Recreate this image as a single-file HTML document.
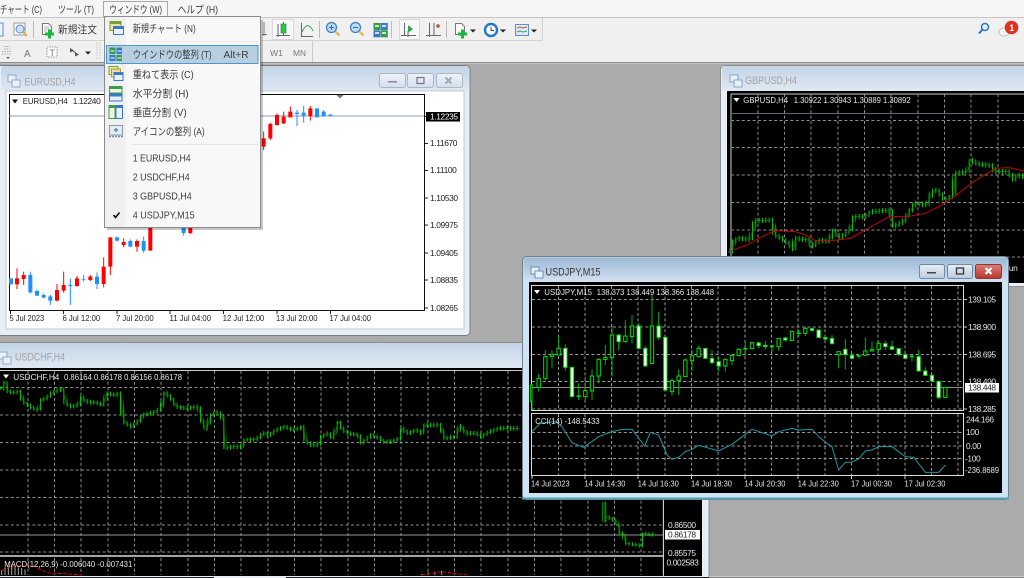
<!DOCTYPE html>
<html lang="ja"><head><meta charset="utf-8"><title>MT4</title>
<style>
html,body{margin:0;padding:0;background:#ababab;width:1024px;height:578px;overflow:hidden}
svg{display:block;filter:blur(.35px)}
text{font-family:"Liberation Sans","Noto Sans CJK JP",sans-serif;font-size:8.4px;letter-spacing:-.37px;fill:#e4e4e4}
text[textLength]{letter-spacing:0}
.k text,text.k{fill:#222}
.m text{font-size:10.5px;fill:#3c3c3c}
.t{font-size:11px!important;fill:#a4a4a4!important}
.f{fill:none}
</style></head><body>
<svg width="1024" height="578" viewBox="0 0 1024 578" xmlns="http://www.w3.org/2000/svg">
<defs>
<linearGradient id="g1" x1="0" y1="0" x2="0" y2="1"><stop offset="0" stop-color="#c3d4e6"/><stop offset="1" stop-color="#dfe9f3"/></linearGradient>
<linearGradient id="g2" x1="0" y1="0" x2="0" y2="1"><stop offset="0" stop-color="#9db7d4"/><stop offset="1" stop-color="#d0e1f1"/></linearGradient>
<linearGradient id="g3" x1="0" y1="0" x2="0" y2="1"><stop offset="0" stop-color="#eef3f8"/><stop offset="1" stop-color="#d4dfea"/></linearGradient>
<linearGradient id="g5" x1="0" y1="0" x2="0" y2="1"><stop offset="0" stop-color="#e8eef4"/><stop offset="1" stop-color="#bccbdc"/></linearGradient>
<linearGradient id="g4" x1="0" y1="0" x2="0" y2="1"><stop offset="0" stop-color="#d98078"/><stop offset="1" stop-color="#b8342a"/></linearGradient>
<pattern id="vb" width="10" height="10" patternUnits="userSpaceOnUse"><rect width="2.800" height="10" fill="#00d000"/></pattern>
</defs>
<rect width="1024" height="578" fill="#ababab"/>

<!-- GBPUSD window -->
<rect x="720.5" y="65.5" width="320" height="221" rx="4" fill="#e6eef7" stroke="#8e8e8e"/>
<rect x="722" y="66" width="318" height="25" fill="url(#g1)"/>
<text class="t" x="745" y="84" textLength="52" lengthAdjust="spacingAndGlyphs">GBPUSD,H4</text>
<g fill="#e8f0f8" stroke="#6f94c0" stroke-width=".8"><rect x="730" y="75" width="8" height="7"/><rect x="734" y="80" width="8" height="7"/></g>
<rect x="727" y="91" width="297" height="192" fill="#000"/>
<path d="M731 94H1024M731 94V283" stroke="#ccc" class="f"/>
<path d="M731 113.5H1024" stroke="#667" class="f"/>
<path d="M758 94V283M784.500 94V283M811 94V283M838 94V283M864.500 94V283M891 94V283M918 94V283M944.500 94V283M971 94V283M998 94V283M731 120.500H1024M731 147.500H1024M731 175H1024M731 202.500H1024M731 230H1024M731 257H1024" stroke="#8c8c8c" stroke-dasharray="3 2.4" class="f"/>
<g transform="translate(512 0) scale(.33333)" fill="none" stroke-linejoin="bevel">
<path d="M657 760L665 725L680 715L715 718L722 690L730 662L780 660L790 705L810 715L835 735L845 750L850 715L890 720L900 740L925 720L950 725L965 690L985 715L1015 690L1027 650L1060 650L1080 635L1135 630L1145 680L1175 665L1190 640L1210 610L1245 615L1260 575L1275 570L1300 600L1325 585L1330 520L1365 515L1378 480L1400 492L1440 497L1450 515L1490 515L1505 540L1520 525L1536 530" stroke="url(#vb)" stroke-width="16"/>
<path d="M657 760L665 725L680 715L715 718L722 690L730 662L780 660L790 705L810 715L835 735L845 750L850 715L890 720L900 740L925 720L950 725L965 690L985 715L1015 690L1027 650L1060 650L1080 635L1135 630L1145 680L1175 665L1190 640L1210 610L1245 615L1260 575L1275 570L1300 600L1325 585L1330 520L1365 515L1378 480L1400 492L1440 497L1450 515L1490 515L1505 540L1520 525L1536 530" stroke="#00a800" stroke-width="1.500"/>
<path d="M657 752L705 735L745 712L790 692L850 695L880 705L910 722L960 722L1015 715L1060 690L1130 650L1185 650L1240 640L1290 615L1340 580L1385 545L1450 505L1490 503L1536 513" stroke="#c80000" stroke-width="3"/>
</g>
<path d="M733.500 98h6l-3 4z" fill="#fff"/>
<text x="743.300" y="103" textLength="44.700" lengthAdjust="spacingAndGlyphs">GBPUSD,H4</text>
<text x="793.700" y="103" textLength="117" lengthAdjust="spacingAndGlyphs">1.30922 1.30943 1.30889 1.30892</text>
<text x="1005" y="271">Jun</text>

<!-- EURUSD window -->
<rect x="-5" y="65.500" width="475" height="270" rx="4" fill="#e6eef7" stroke="#7d7d7d"/>
<rect x="1" y="66" width="468" height="25" rx="3" fill="url(#g1)"/>
<g fill="#e8f0f8" stroke="#7c9cc4" stroke-width=".8"><rect x="8" y="75" width="8" height="7"/><rect x="12" y="80" width="8" height="7"/></g>
<text class="t" x="24.500" y="85.500" textLength="51" lengthAdjust="spacingAndGlyphs">EURUSD,H4</text>
<g stroke="#a8b8c8"><rect x="379.500" y="73.500" width="26" height="14" rx="2" fill="url(#g3)"/><rect x="407.500" y="73.500" width="26" height="14" rx="2" fill="url(#g3)"/><rect x="436.500" y="73.500" width="26" height="14" rx="2" fill="url(#g3)"/></g>
<path d="M388 82.500h9v-1.500h-9z" fill="#889"/>
<rect x="417" y="77.500" width="7" height="6" fill="none" stroke="#778" stroke-width="1.200"/>
<path d="M445.500 77.500l6 6m0-6l-6 6" stroke="#a0a8b2" stroke-width="2"/>
<rect x="6" y="91" width="458" height="238" fill="#fff" stroke="#b8c2cc" stroke-width=".8"/>
<path d="M9.500 94.500H424.500V310.500H9.500Z" fill="#fff" stroke="#111"/>
<path d="M9.500 116H424" stroke="#9fb0c2" stroke-width="1.200"/>
<path d="M336.500 95h7l-3.500 3.500z" fill="#6d7480"/>
<path d="M10.500 311v3M63.500 311v3M117 311v3M170 311v3M223.500 311v3M277 311v3M330.500 311v3M425 116.500h3M425 143.500h3M425 170.500h3M425 198h3M425 225h3M425 253h3M425 280h3M425 308h3" stroke="#222"/>
<g transform="translate(0 230) scale(.33333)" fill="none">
<path d="M51 115V177M71 125V165M171 162V214M191 125V188M231 138V170M271 135V153M311 82V172M331 22V135M371 25V52M411 28V65M451 -15V62M571 -15V12" stroke="#f00" stroke-width="3"/>
<path d="M51 145V163M71 135V147M171 180V212M191 165V182M231 145V168M271 140V150M311 110V162M331 22V110M371 36V45M411 33V50M451 -15V62M571 -10V9" stroke="#f00" stroke-width="12"/>
<path d="M91 125V190M111 178V198M131 190V205M151 195V225M211 145V225M251 135V155M291 127V177M351 20V35M391 28V52M431 20V68M551 -12V17" stroke="#1e90ff" stroke-width="3"/>
<path d="M33 145V163M91 135V187M111 183V197M131 195V203M151 199V212M211 165V168M251 148V150M291 140V162M351 22V32M391 33V50M431 33V62M551 -10V9" stroke="#1e90ff" stroke-width="12"/>
</g>
<g transform="scale(.33333)" fill="none">
<path d="M791 395V450M811 368V420M831 340V377M851 335V372M871 320V352M931 318V362" stroke="#f00" stroke-width="3"/>
<path d="M791 415V440M811 372V415M831 345V375M851 350V370M871 335V352M931 325V348" stroke="#f00" stroke-width="12"/>
<path d="M891 330V378M911 318V368M971 330V350M991 342V349" stroke="#1e90ff" stroke-width="3"/>
<path d="M891 338V342M911 338V347M951 325V352M971 335V348M991 344V347" stroke="#1e90ff" stroke-width="12"/>
</g>
<path d="M12 99.500h6l-3 4z" fill="#111"/>
<g class="k">
<text x="22.700" y="104" textLength="45" lengthAdjust="spacingAndGlyphs">EURUSD,H4</text>
<text x="72.700" y="104">1.12240</text>
<text x="430" y="146">1.11670</text><text x="430" y="173">1.11100</text><text x="430" y="200.800">1.10530</text><text x="430" y="228">1.09975</text><text x="430" y="255.800">1.09405</text><text x="430" y="283">1.08835</text><text x="430" y="310.800">1.08265</text>
<text x="9.500" y="320.800" textLength="34.700" lengthAdjust="spacingAndGlyphs">5 Jul 2023</text><text x="62.500" y="320.800" textLength="37.700" lengthAdjust="spacingAndGlyphs">6 Jul 12:00</text><text x="116" y="320.800" textLength="37.700" lengthAdjust="spacingAndGlyphs">7 Jul 20:00</text><text x="169.500" y="320.800" textLength="41.500" lengthAdjust="spacingAndGlyphs">11 Jul 04:00</text><text x="222.800" y="320.800" textLength="41.500" lengthAdjust="spacingAndGlyphs">12 Jul 12:00</text><text x="276" y="320.800" textLength="41.500" lengthAdjust="spacingAndGlyphs">13 Jul 20:00</text><text x="329.500" y="320.800" textLength="41.500" lengthAdjust="spacingAndGlyphs">17 Jul 04:00</text>
</g>
<rect x="426" y="112" width="34" height="9.500" fill="#000"/>
<text x="430" y="119.700" style="fill:#fff">1.12235</text>

<!-- USDCHF window -->
<rect x="-5" y="342.500" width="714" height="240" rx="4" fill="#e6eef7" stroke="#8e8e8e"/>
<rect x="0" y="343" width="708" height="25" fill="url(#g1)"/>
<g fill="#e8f0f8" stroke="#7c9cc4" stroke-width=".8"><rect x="-1" y="352" width="8" height="7"/><rect x="3" y="357" width="8" height="7"/></g>
<text class="t" x="15" y="360.500" textLength="50" lengthAdjust="spacingAndGlyphs">USDCHF,H4</text>
<rect x="0" y="368" width="702" height="208" fill="#000"/>
<path d="M0 370.500H663.500V575" stroke="#ccc" class="f"/>
<path d="M0 535H663" stroke="#777" stroke-width="1.200"/>
<path d="M0 556H663" stroke="#bbb" stroke-width="1.800"/>
<path d="M28 371V555M54.500 371V555M81 371V555M108 371V555M134.500 371V555M161 371V555M188 371V555M214.500 371V555M241 371V555M268 371V555M294.500 371V555M321 371V555M348 371V555M374.500 371V555M401 371V555M428 371V555M454.500 371V555M481 371V555M508 371V555M534.500 371V555M561 371V555M588 371V555M614.500 371V555M641 371V555M0 387.500H663M0 415H663M0 442.500H663M0 470H663M0 497.500H663M0 525H663M0 552H663M28 558V575M54.500 558V575M81 558V575M108 558V575M134.500 558V575M161 558V575M188 558V575M214.500 558V575M241 558V575M268 558V575M294.500 558V575M321 558V575M348 558V575M374.500 558V575M401 558V575M428 558V575M454.500 558V575M481 558V575M508 558V575M534.500 558V575M561 558V575M588 558V575M614.500 558V575M641 558V575" stroke="#8c8c8c" stroke-dasharray="3 2.400" class="f"/>
<g transform="translate(0 230) scale(.33333)" fill="none" stroke-linejoin="bevel">
<path d="M5 480L15 455L25 485L40 487L60 485L70 515L85 525L100 535L115 540L125 510L140 505L155 490L175 480L190 478L197 520L215 530L235 525L245 500L260 515L290 518L310 525L320 490L345 495L362 490L367 550L375 578L395 590L415 575L430 555L450 550L470 545L485 530L495 487L515 505L530 530L560 535L595 530L605 570L620 600L630 560L650 545L665 555L672 580L675 655L700 650L725 650L735 630L770 628L790 610L810 615L830 600L855 590L880 600L912 590L915 630L935 645L955 645L965 620L985 610L1000 625L1015 575L1030 600L1045 610L1075 615L1085 640L1115 615L1140 625L1150 635L1175 635L1200 625L1207 595L1225 610L1250 600L1265 610L1275 585L1320 585L1335 625L1370 620L1380 585L1400 610L1430 610L1445 620L1470 605L1500 595L1560 595" stroke="url(#vb)" stroke-width="14"/>
<path d="M5 480L15 455L25 485L40 487L60 485L70 515L85 525L100 535L115 540L125 510L140 505L155 490L175 480L190 478L197 520L215 530L235 525L245 500L260 515L290 518L310 525L320 490L345 495L362 490L367 550L375 578L395 590L415 575L430 555L450 550L470 545L485 530L495 487L515 505L530 530L560 535L595 530L605 570L620 600L630 560L650 545L665 555L672 580L675 655L700 650L725 650L735 630L770 628L790 610L810 615L830 600L855 590L880 600L912 590L915 630L935 645L955 645L965 620L985 610L1000 625L1015 575L1030 600L1045 610L1075 615L1085 640L1115 615L1140 625L1150 635L1175 635L1200 625L1207 595L1225 610L1250 600L1265 610L1275 585L1320 585L1335 625L1370 620L1380 585L1400 610L1430 610L1445 620L1470 605L1500 595L1560 595" stroke="#00a800" stroke-width="1.500"/>
<path d="M5 1035V1020M15 1035V1012M25 1035V1008M35 1035V1005M45 1035V1010M55 1035V1012M65 1035V1014M75 1035V1018M1265 1035V1032M1285 1035V1027M1305 1035V1024M1325 1035V1022" stroke="#aaa" stroke-width="3"/>
<path d="M5 1022L40 1008L100 1008L140 1028L250 1035M1265 1035L1325 1025L1400 1035" stroke="#e00000" stroke-width="3" stroke-dasharray="10 6"/>
</g>
<g transform="translate(512 250) scale(.33333)" fill="none" stroke-linejoin="bevel">
<path d="M277 755L277 815L285 800L315 815L325 850L335 850L340 880L380 885L388 890L395 850L430 855" stroke="url(#vb)" stroke-width="12"/>
<path d="M277 755L277 815L285 800L315 815L325 850L335 850L340 880L380 885L388 890L395 850L430 855" stroke="#00a800" stroke-width="1.500"/>
<path d="M454 750V980" stroke="#ccc" stroke-width="3"/>
</g>
<path d="M3 374.500h6l-3 4z" fill="#fff"/>
<text x="13.300" y="380" textLength="46" lengthAdjust="spacingAndGlyphs">USDCHF,H4</text>
<text x="64" y="380" textLength="118" lengthAdjust="spacingAndGlyphs">0.86164 0.86178 0.86156 0.86178</text>
<text x="4.300" y="567" textLength="128" lengthAdjust="spacingAndGlyphs">MACD(12,26,9) -0.006040 -0.007431</text>
<text x="668" y="528">0.86500</text>
<rect x="665" y="530" width="35" height="9.500" fill="#fff"/>
<text x="668" y="537.700" style="fill:#222">0.86178</text>
<text x="668" y="555.800">0.85575</text>
<text x="666.500" y="565.500">0.002583</text>
<path d="M0 577.500H1024" stroke="#222"/>
<path d="M214 577.500H286" stroke="#eee"/>
<path d="M709 577H1024" stroke="#e6e6e6"/>

<!-- USDJPY window -->
<rect x="522.500" y="256.500" width="486" height="243" rx="4" fill="#cfe3f3" stroke="#6e7f8e"/>
<rect x="523.500" y="257.500" width="484" height="24" rx="3" fill="url(#g2)"/>
<rect x="522" y="497.500" width="487" height="2" fill="#4fa3b8"/>
<g fill="#e8f0f8" stroke="#4f7eb4" stroke-width=".8"><rect x="531" y="267" width="8" height="7"/><rect x="535" y="271" width="8" height="7"/></g>
<text x="545.500" y="275.500" textLength="55" lengthAdjust="spacingAndGlyphs" style="font-size:11px;fill:#333">USDJPY,M15</text>
<g stroke="#6d89a8"><rect x="919.500" y="264.500" width="25" height="14" rx="2" fill="url(#g5)"/><rect x="947.500" y="264.500" width="25" height="14" rx="2" fill="url(#g5)"/></g>
<rect x="975.500" y="264.500" width="26" height="14" rx="2" fill="url(#g4)" stroke="#8a3a34"/>
<path d="M927 273.500h9v-1.500h-9z" fill="#445"/>
<rect x="956.500" y="268" width="7" height="6" fill="none" stroke="#334" stroke-width="1.300"/>
<path d="M985.500 268l6 6m0-6l-6 6" stroke="#fff" stroke-width="2.200"/>
<rect x="529" y="282" width="473" height="211" fill="#000"/>
<path d="M531.500 285.500H963.500V410.500H531.500ZM531.500 413.500H963.500V475.500H531.500Z" stroke="#ddd" class="f"/>
<path d="M532 387.500H964" stroke="#8a8a8a"/>
<path d="M558.500 286V410M585 286V410M611.500 286V410M638 286V410M665 286V410M691.500 286V410M718 286V410M745 286V410M771.500 286V410M798 286V410M825 286V410M851.500 286V410M878 286V410M905 286V410M931.500 286V410M958 286V410M558.500 414V475M585 414V475M611.500 414V475M638 414V475M665 414V475M691.500 414V475M718 414V475M745 414V475M771.500 414V475M798 414V475M825 414V475M851.500 414V475M878 414V475M905 414V475M931.500 414V475M958 414V475M532 299.500H963M532 327H963M532 354.500H963M532 381.500H963M532 409H963M532 432.500H963M532 446H963M532 458.500H963" stroke="#969696" stroke-dasharray="3 2.400" class="f"/>
<path d="M532 476v3M585 476v3M638 476v3M691.500 476v3M745 476v3M798 476v3M851.500 476v3M905 476v3M964 299.500h3M964 327h3M964 354.500h3M964 409h3" stroke="#ccc"/>
<g transform="translate(512 250) scale(.33333)" fill="none">
<path d="M60 400V480M80 372V425M100 300V390M120 302V355M140 255V315M160 283V362M200 400V450M220 380V458M240 358V450M260 325V400M280 285V345M300 225V380M320 253V300M340 210V278M360 195V280M380 220V298M400 288V350M420 135V342M440 185V270M460 262V425M480 385V437M500 358V435M520 325V382M540 300V362M560 287V322M600 300V342M620 320V365M640 325V365M660 312V345M680 295V320M700 278V318M720 276V298M740 275V295M760 273V298M780 285V305M800 265V302M820 260V275M860 240V260M880 230V258M900 232V245M940 258V272M960 255V283M980 305V355M1000 268V358M1020 310V328M1040 312V325M1060 262V318M1080 275V305M1100 272V305M1120 272V300M1140 272V300M1160 295V318M1180 310V328M1200 315V335M1220 300V365M1240 352V378M1260 373V395M1280 392V447M1300 412V445" stroke="#00b000" stroke-width="3"/>
<path d="M55 405h5v50h-5zM75 385h10v27h-10zM95 320h10v65h-10zM115 313h10v7h-10zM135 295h10v20h-10zM215 422h10v18h-10zM235 378h10v45h-10zM255 328h10v50h-10zM275 322h10v6h-10zM295 255h10v67h-10zM335 258h10v17h-10zM355 228h10v32h-10zM415 228h10v112h-10zM475 392h10v33h-10zM495 378h10v14h-10zM515 330h10v50h-10zM535 318h10v14h-10zM555 295h10v25h-10zM635 328h10v20h-10zM655 316h10v16h-10zM675 298h10v18h-10zM715 278h10v18h-10zM795 265h10v25h-10zM835 244h10v28h-10zM875 235h10v15h-10zM975 305h10v9h-10zM1055 303h10v13h-10zM1075 298h10v5h-10zM1095 281h10v17h-10zM1295 412h10v30h-10z" fill="#000" stroke="#00e000" stroke-width="3"/>
<path d="M155 295h10v57h-10zM175 352h10v88h-10zM315 255h10v20h-10zM375 228h10v67h-10zM395 295h10v53h-10zM435 228h10v34h-10zM455 262h10v158h-10zM575 295h10v30h-10zM595 325h10v13h-10zM615 335h10v13h-10zM735 279h10v8h-10zM755 286h10v4h-10zM815 264h10v6h-10zM895 236h10v5h-10zM915 240h10v23h-10zM935 263h10v4h-10zM955 265h10v16h-10zM995 298h10v16h-10zM1015 316h10v9h-10zM1115 281h10v9h-10zM1135 290h10v8h-10zM1155 296h10v17h-10zM1175 314h10v11h-10zM1215 320h10v43h-10zM1235 363h10v13h-10zM1255 376h10v17h-10zM1275 394h10v48h-10z" fill="#fff" stroke="#00e000" stroke-width="3"/>
<path d="M195 437h10v3h-10zM695 295h10v3h-10zM775 287h10v3h-10zM855 248h10v3h-10zM1035 316h10v3h-10zM1195 318h10v3h-10z" fill="#00e000" stroke="#00e000" stroke-width="2"/>
<path d="M60 545L85 520L130 515L150 530L180 578L215 592L260 560L300 545L330 538L360 538L398 588L415 547L440 555L465 615L480 628L500 622L520 605L540 598L560 586L620 603L660 583L720 538L780 558L800 545L840 535L860 540L900 538L920 560L945 580L960 590L980 660L1000 637L1020 636L1040 627L1060 603L1080 600L1100 590L1140 590L1180 620L1205 622L1240 667L1280 667L1300 645" stroke="#1f9aa0" stroke-width="3"/>
</g>
<path d="M534 290h6l-3 4z" fill="#fff"/>
<text x="544.300" y="295" textLength="47.700" lengthAdjust="spacingAndGlyphs">USDJPY,M15</text>
<text x="596.700" y="295" textLength="117.300" lengthAdjust="spacingAndGlyphs">138.373 138.449 138.366 138.448</text>
<text x="535.300" y="424" textLength="64.300" lengthAdjust="spacingAndGlyphs">CCI(14) -148.5433</text>
<text x="968" y="302.300">139.105</text><text x="968" y="330">138.900</text><text x="968" y="357.300">138.695</text><text x="968" y="384.500">138.490</text>
<rect x="965" y="383" width="34" height="9.500" fill="#fff"/>
<text x="968" y="390.700" style="fill:#222">138.448</text>
<text x="968" y="412">138.285</text>
<text x="966" y="422.500">244.166</text><text x="966" y="435">100</text><text x="966" y="449">0.00</text><text x="965" y="461.500">-100</text><text x="965" y="473" textLength="34" lengthAdjust="spacingAndGlyphs">-236.8689</text>
<g>
<text x="531" y="486.500" textLength="38.700" lengthAdjust="spacingAndGlyphs">14 Jul 2023</text><text x="584.500" y="486.500" textLength="41" lengthAdjust="spacingAndGlyphs">14 Jul 14:30</text><text x="637.800" y="486.500" textLength="41" lengthAdjust="spacingAndGlyphs">14 Jul 16:30</text><text x="691" y="486.500" textLength="41" lengthAdjust="spacingAndGlyphs">14 Jul 18:30</text><text x="744.500" y="486.500" textLength="41" lengthAdjust="spacingAndGlyphs">14 Jul 20:30</text><text x="797.800" y="486.500" textLength="41" lengthAdjust="spacingAndGlyphs">14 Jul 22:30</text><text x="851" y="486.500" textLength="41" lengthAdjust="spacingAndGlyphs">17 Jul 00:30</text><text x="904.500" y="486.500" textLength="41" lengthAdjust="spacingAndGlyphs">17 Jul 02:30</text>
</g>

<!-- Toolbars -->
<rect width="1024" height="62" fill="#f0f0f0"/>
<rect width="1024" height="17" fill="#f6f6f6"/>
<path d="M0 17.500H1024" stroke="#c6c6c6"/>
<path d="M0 62.500H1024" stroke="#8c8c8c"/><path d="M0 63.500H1024" stroke="#c0c0c0"/>
<path d="M0 40.500H542.500V18M0 40.500H312.500V62" stroke="#d2d2d2" class="f"/>
<g class="m">
<text x="0" y="13" textLength="42" lengthAdjust="spacingAndGlyphs">チャート (C)</text>
<text x="58" y="13" textLength="36" lengthAdjust="spacingAndGlyphs">ツール (T)</text>
<text x="177.700" y="13" textLength="40.300" lengthAdjust="spacingAndGlyphs">ヘルプ (H)</text>
<text x="58" y="33" textLength="39" lengthAdjust="spacingAndGlyphs" style="font-size:10.500px">新規注文</text>
</g>
<rect x="103.500" y="1.500" width="64" height="15" fill="#f6f6f6" stroke="#a8a8a8"/>
<text x="109.300" y="13" textLength="52.700" lengthAdjust="spacingAndGlyphs" style="font-size:10.500px;fill:#3c3c3c">ウィンドウ (W)</text>

<!-- toolbar icons left -->
<rect x="-3" y="23" width="6" height="13" fill="#eef4fb" stroke="#5b8fd0"/>
<rect x="14" y="23" width="11" height="12" fill="#fff" stroke="#9a9a9a"/><circle cx="20" cy="29" r="4" fill="#cfe2f5" stroke="#5b8fd0"/><path d="M23 32l4 4" stroke="#d9b04a" stroke-width="2"/>
<path d="M33.500 21V38" stroke="#bbb"/>
<path d="M42.500 23.500h6l3 3v8h-9z" fill="#fff" stroke="#777"/><path d="M44 27h5M44 29h5M44 31h3" stroke="#999" stroke-width=".8"/>
<path d="M49.500 29.500v9M45 34h9" stroke="#19b83a" stroke-width="3"/>
<path d="M4 46.500h6M4 49h6M2 51.500h9M2 54h9" stroke="#aaa" stroke-dasharray="1.500 1"/>
<path d="M6 57h4l-2 2z" fill="#666"/>
<text x="24" y="57" style="font-size:10px;fill:#777">A</text>
<rect x="47" y="47" width="10" height="10" fill="#fff" stroke="#999" stroke-dasharray="1.500 1"/>
<text x="49.500" y="56" style="font-size:9px;fill:#777">T</text>
<path d="M70 48l4 2.500-4 2zM75 52l4 2.500-4 2z" fill="#555"/><path d="M72 50l6 5" stroke="#555"/>
<path d="M85 51.500h6l-3 3z" fill="#222"/>
<path d="M97 42V60M100 42V60" stroke="#c4c4c4" stroke-dasharray="1.500 1"/>
<text x="270" y="56" textLength="13" lengthAdjust="spacingAndGlyphs" style="fill:#777">W1</text><text x="293" y="56" textLength="13" lengthAdjust="spacingAndGlyphs" style="fill:#777">MN</text>
<path d="M312.500 41V62" stroke="#ccc"/>

<!-- toolbar icons right -->
<path d="M262 34.500h5M264 22v14" stroke="#777"/>
<rect x="272.500" y="19.500" width="21" height="20" fill="#f8f8f8" stroke="#d8d8d8"/>
<path d="M283.500 22V35M276 35.500H290M278 24V37" stroke="#667" stroke-width="1"/>
<rect x="281" y="24" width="5" height="9" fill="#2fc24a" stroke="#128a2a" stroke-width=".6"/>
<path d="M301.500 23V36.500H313" stroke="#667" class="f"/><path d="M302 32Q306 24 309 26T313 31" stroke="#3aa05a" class="f"/>
<path d="M319.500 21V38" stroke="#bbb"/>
<circle cx="331.500" cy="27.500" r="5" fill="#bcdcf5" stroke="#3f7fc0" stroke-width="1.300"/><path d="M335.500 31.500l4 4" stroke="#d8bb4a" stroke-width="2.200"/><path d="M329 27.500h5M331.500 25v5" stroke="#2f6fb0"/>
<circle cx="355.500" cy="27.500" r="5" fill="#bcdcf5" stroke="#3f7fc0" stroke-width="1.300"/><path d="M359.500 31.500l4 4" stroke="#d8bb4a" stroke-width="2.200"/><path d="M353 27.500h5" stroke="#2f6fb0"/>
<g><rect x="373.500" y="23" width="7" height="7" fill="#2f9e44"/><rect x="380.800" y="23" width="7" height="7" fill="#3c78c8"/><rect x="373.500" y="30.300" width="7" height="7" fill="#3c78c8"/><rect x="380.800" y="30.300" width="7" height="7" fill="#2f9e44"/><path d="M375 26h4M382 26h4M375 33h4M382 33h4" stroke="#fff" stroke-width="1.500"/></g>
<path d="M391.500 21V38" stroke="#bbb"/>
<rect x="399.500" y="19.500" width="20" height="20" fill="#f8f8f8" stroke="#d8d8d8"/>
<path d="M404.500 23V36M401 35.500H416M408 31v6" stroke="#667" class="f"/><path d="M408 25l5 4-5 4z" fill="#2aa84a"/>
<path d="M429.500 23V37M426 35.500H441M434 23v13" stroke="#667" class="f"/><path d="M436 26h4M438 24v4" stroke="#d8452a" stroke-width="1.500"/>
<path d="M446.500 21V38" stroke="#bbb"/>
<path d="M455.500 23.500h6l3 3v8h-9z" fill="#fff" stroke="#777"/>
<path d="M462.500 29.500v9M458 34h9" stroke="#19b83a" stroke-width="3"/>
<path d="M470 29.500h6l-3 3z" fill="#222"/>
<circle cx="491" cy="30" r="6" fill="#fff" stroke="#2478c8" stroke-width="2.400"/><path d="M491 27v3.500h3" stroke="#245" class="f"/>
<path d="M500 29.500h6l-3 3z" fill="#222"/>
<rect x="515.500" y="24.500" width="13" height="11" fill="#dfe9f5" stroke="#5b8fd0"/><path d="M517 28l3-1 3 1 4-1" stroke="#d8553a" class="f"/><path d="M517 32l3-1 3 1 4-1" stroke="#3aa05a" class="f"/>
<path d="M531 29.500h6l-3 3z" fill="#222"/>
<circle cx="985" cy="27" r="3.500" fill="#e6f0fb" stroke="#2f6fc8" stroke-width="1.500"/><path d="M982.500 29.500l-3.500 4" stroke="#2f6fc8" stroke-width="2"/>
<ellipse cx="1004" cy="32" rx="5" ry="4" fill="#f4f4f4" stroke="#c4c4c4"/>
<circle cx="1011.500" cy="27.500" r="6.800" fill="#e0301e"/>
<text x="1009.300" y="31" style="font-size:9px;fill:#fff;font-weight:bold">1</text>

<!-- dropdown -->
<rect x="107" y="20" width="156" height="210" fill="#000" opacity=".22"/>
<rect x="104.500" y="16.500" width="156" height="211" fill="#f8f8f8" stroke="#8a8a8a"/>
<rect x="105" y="17" width="21" height="210" fill="#f0f0f0"/>
<path d="M132 41.500H258M132 144.500H258" stroke="#e6e6e6"/>
<rect x="106.500" y="45.500" width="151.500" height="18" fill="#b8cfe2" stroke="#4a98d4"/>
<!-- menu icons -->
<rect x="110" y="21.500" width="11" height="9" fill="#e8e0b0" stroke="#8a9a30"/><rect x="110" y="21.500" width="11" height="2.500" fill="#6aa536"/>
<rect x="113.500" y="26.500" width="10" height="8" fill="#e8f0fa" stroke="#3c78c8"/><rect x="113.500" y="26.500" width="10" height="2.500" fill="#3c78c8"/>
<rect x="109.500" y="47.500" width="6" height="6.500" fill="#2f9e44"/><rect x="116.500" y="47.500" width="5.500" height="6.500" fill="#3c78c8"/><rect x="109.500" y="55" width="6" height="6" fill="#3c78c8"/><rect x="116.500" y="55" width="5.500" height="6" fill="#2f9e44"/><path d="M110.500 51h4M117.500 51h4M110.500 58h4M117.500 58h4" stroke="#fff"/>
<rect x="109" y="66.500" width="9" height="8" fill="#e4ecc0" stroke="#6aa536"/><rect x="111.500" y="69" width="9" height="8" fill="#ecdca0" stroke="#b89a30"/><rect x="114" y="72.500" width="9" height="8" fill="#e8f0fa" stroke="#3c78c8"/><rect x="114" y="72.500" width="9" height="2.500" fill="#3c78c8"/>
<rect x="109.500" y="86.500" width="12.500" height="6.500" fill="#eef6e8" stroke="#3f9e4a"/><rect x="109.500" y="86.500" width="12.500" height="2.500" fill="#3f9e4a"/><rect x="109.500" y="94" width="12.500" height="7" fill="#e8f0fa" stroke="#3c78c8"/><rect x="109.500" y="94" width="12.500" height="2.500" fill="#3c78c8"/>
<rect x="109" y="105.500" width="6" height="13" fill="#eef6e8" stroke="#3f9e4a"/><rect x="109" y="105.500" width="6" height="2.500" fill="#3f9e4a"/><rect x="116" y="105.500" width="6.500" height="13" fill="#e8f0fa" stroke="#3c78c8"/><rect x="116" y="105.500" width="6.500" height="2.500" fill="#3c78c8"/>
<rect x="109.500" y="125.500" width="13" height="9.500" fill="#e6ecf2" stroke="#8a9aaa"/><path d="M114 130h4M116 128v4" stroke="#3c88d0" stroke-width="1.300"/><path d="M109 136.500h14" stroke="#5b8fd0" stroke-width="1.500" stroke-dasharray="2 1"/>
<path d="M113.500 215l2 2.500 4-5" stroke="#111" stroke-width="1.600" class="f"/>
<g class="m">
<text x="132.700" y="32" textLength="63" lengthAdjust="spacingAndGlyphs">新規チャート (N)</text>
<text x="132.700" y="58" textLength="79" lengthAdjust="spacingAndGlyphs">ウインドウの整列 (T)</text>
<text x="223.500" y="58" textLength="25" lengthAdjust="spacingAndGlyphs">Alt+R</text>
<text x="132.700" y="78" textLength="61" lengthAdjust="spacingAndGlyphs">重ねて表示 (C)</text>
<text x="132.700" y="97" textLength="56" lengthAdjust="spacingAndGlyphs">水平分割 (H)</text>
<text x="132.700" y="116" textLength="54" lengthAdjust="spacingAndGlyphs">垂直分割 (V)</text>
<text x="132.700" y="135" textLength="72" lengthAdjust="spacingAndGlyphs">アイコンの整列 (A)</text>
<text x="132.700" y="161.500" textLength="58" lengthAdjust="spacingAndGlyphs">1 EURUSD,H4</text>
<text x="132.700" y="180.500" textLength="57" lengthAdjust="spacingAndGlyphs">2 USDCHF,H4</text>
<text x="132.700" y="199.500" textLength="59" lengthAdjust="spacingAndGlyphs">3 GBPUSD,H4</text>
<text x="132.700" y="218.500" textLength="62" lengthAdjust="spacingAndGlyphs">4 USDJPY,M15</text>
</g>
</svg>
</body></html>
